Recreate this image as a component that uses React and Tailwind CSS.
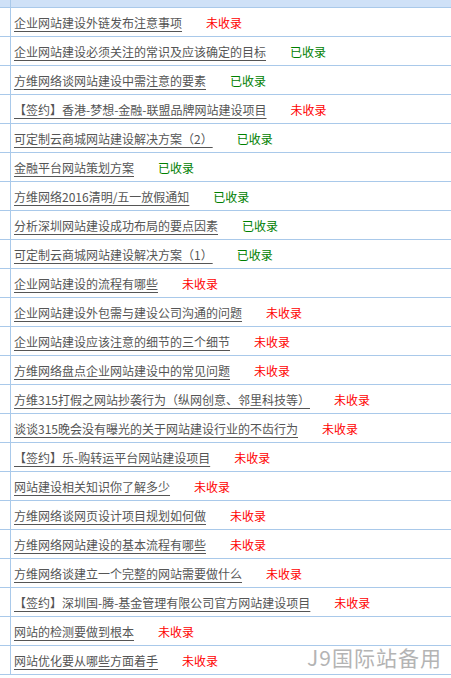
const items = [
  { title: "企业网站建设外链发布注意事项", ok: false },
  { title: "企业网站建设必须关注的常识及应该确定的目标", ok: true },
  { title: "方维网络谈网站建设中需注意的要素", ok: true },
  { title: "【签约】香港-梦想-金融-联盟品牌网站建设项目", ok: false },
  { title: "可定制云商城网站建设解决方案（2）", ok: true },
  { title: "金融平台网站策划方案", ok: true },
  { title: "方维网络2016清明/五一放假通知", ok: true },
  { title: "分析深圳网站建设成功布局的要点因素", ok: true },
  { title: "可定制云商城网站建设解决方案（1）", ok: true },
  { title: "企业网站建设的流程有哪些", ok: false },
  { title: "企业网站建设外包需与建设公司沟通的问题", ok: false },
  { title: "企业网站建设应该注意的细节的三个细节", ok: false },
  { title: "方维网络盘点企业网站建设中的常见问题", ok: false },
  { title: "方维315打假之网站抄袭行为（纵网创意、邻里科技等）", ok: false },
  { title: "谈谈315晚会没有曝光的关于网站建设行业的不齿行为", ok: false },
  { title: "【签约】乐-购转运平台网站建设项目", ok: false },
  { title: "网站建设相关知识你了解多少", ok: false },
  { title: "方维网络谈网页设计项目规划如何做", ok: false },
  { title: "方维网络网站建设的基本流程有哪些", ok: false },
  { title: "方维网络谈建立一个完整的网站需要做什么", ok: false },
  { title: "【签约】深圳国-腾-基金管理有限公司官方网站建设项目", ok: false },
  { title: "网站的检测要做到根本", ok: false },
  { title: "网站优化要从哪些方面着手", ok: false },
];

export default function App() {
  return (
    <div
      className="relative w-[451px] h-[678px] overflow-hidden bg-white text-[12px] leading-none"
      style={{ fontFamily: '"Noto Sans CJK SC", "Liberation Sans", sans-serif' }}
    >
      <div className="grid grid-cols-[10px_1fr]">
        <div className="h-[8px] bg-[#cfe1f7] border-b border-[#a9c9ea]" />
        <div className="h-[8px] bg-[#cfe1f7] border-b border-l border-[#a9c9ea]" />
        {items.map((it, i) => (
          <div key={i} className="contents">
            <div className="h-[29px] border-b border-[#a9c9ea]" />
            <div className="h-[29px] border-b border-l border-[#a9c9ea] flex items-center pl-[3px] pt-[1px]">
              <span className="text-[#555] underline underline-offset-[3px] whitespace-nowrap">
                {it.title}
              </span>
              <span
                className={
                  "ml-[24px] whitespace-nowrap " +
                  (it.ok ? "text-[#008000]" : "text-[#ff0000]")
                }
              >
                {it.ok ? "已收录" : "未收录"}
              </span>
            </div>
          </div>
        ))}
      </div>
      <div className="absolute right-[9px] bottom-[10px] text-[21px] text-[#b4b4b4] tracking-[1px]">
        J9国际站备用
      </div>
    </div>
  );
}
